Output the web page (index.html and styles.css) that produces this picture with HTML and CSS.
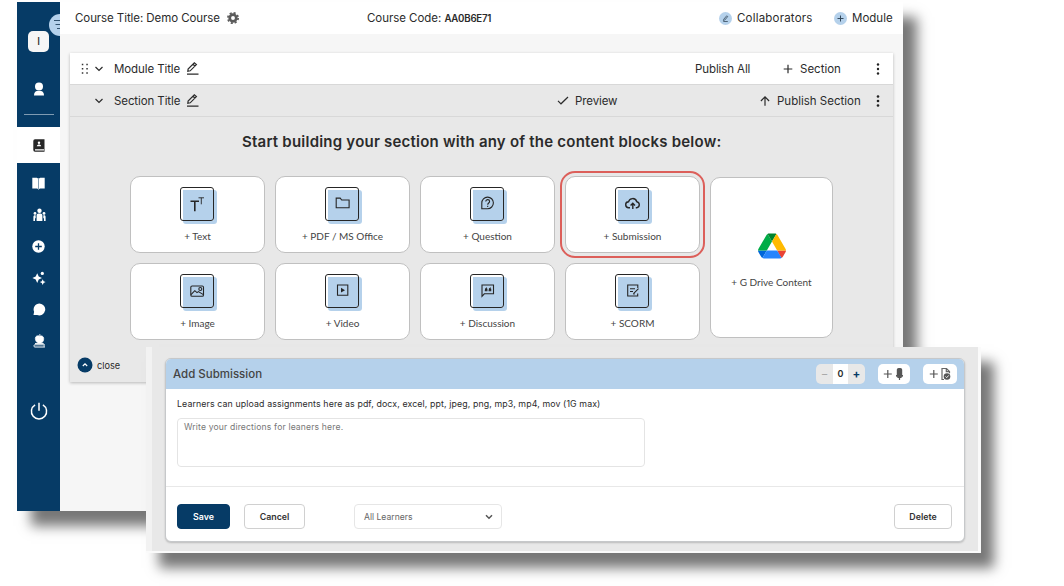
FILE: index.html
```html
<!DOCTYPE html>
<html lang="en">
<head>
    <meta charset="UTF-8">
    <meta name="viewport" content="width=device-width, initial-scale=1.0">
    <title>Course Builder</title>

    <link rel="stylesheet" href="styles.css">
</head>
<body>
    <div class="window">
        <!-- Sidebar -->
        <nav class="sidebar">
            <span class="menu-toggle">
                <svg width="22" height="22" viewBox="0 0 22 22"><path d="M5 6.5h13M6.5 10.5h12M8 14.500h11" stroke="#33536f" stroke-width="1"/></svg>
            </span>
            <div class="initial">I</div>
            <a class="item person"><svg width="12" height="14" viewBox="0 0 12 14" fill="#fff"><circle cx="6" cy="4.500" r="4"/><path d="M1 13.500c0-3 1.500-4.500 3-4.500h4c1.500 0 3 1.500 3 4.500z"/></svg></a>
            <hr>
            <a class="item active"><svg width="12" height="13" viewBox="0 0 12 13"><path d="M2 .2h9.500v12.500H2A1.700 1.700 0 0 1 .3 11V2A1.800 1.800 0 0 1 2 .2z" fill="#262626"/><circle cx="6" cy="3.800" r="1.200" fill="#fff"/><path d="M3.800 7.300c.2-2.400 4.200-2.400 4.400 0zM2 10.200h9v1.300H2z" fill="#fff"/></svg></a>
            <a class="item book"><svg width="13" height="13" viewBox="0 0 13 13" fill="#fff"><path d="M.3.700h4.500l1.300.7v10.700l-1.300-.6H.3zM7 1.400l1.300-.7h4.400v10.800H8.300l-1.300.6z"/><path d="M6.200 1h.8v12h-.8z" opacity=".55"/></svg></a>
            <a class="item people"><svg width="13" height="14" viewBox="0 0 13 14" fill="#fff"><circle cx="6.500" cy="2.700" r="2.200"/><circle cx="2" cy="5.400" r="1.400"/><circle cx="11" cy="5.400" r="1.400"/><path d="M3.600 13V7.500c0-1.300.8-2 2-2h1.800c1.200 0 2 .7 2 2V13zM.4 13V9c0-1.200.5-1.700 1.300-1.700h1V10l-.7.500V13zM12.600 13V9c0-1.200-.5-1.700-1.300-1.700h-1V10l.7.500V13z"/></svg></a>
            <a class="item plus"><svg width="13" height="13" viewBox="0 0 13 13"><circle cx="6.500" cy="6.500" r="6.200" fill="#fff"/><path d="M6.500 3.200v6.600M3.200 6.500h6.600" stroke="#063b66" stroke-width="1.300"/></svg></a>
            <a class="item sparkles"><svg width="14" height="14" viewBox="0 0 14 14" fill="#fff"><path d="M5.200 2.200l1.500 3.400L10 7.100 6.700 8.600l-1.500 3.500-1.500-3.500L.4 7.100l3.300-1.500z"/><circle cx="10.300" cy="2.400" r="1.600"/><path d="M10.700 8.200l.9 2 2 .8-2 .9-.9 2-.9-2-2-.9 2-.8z"/></svg></a>
            <a class="item chat"><svg width="13" height="13" viewBox="0 0 13 13" fill="#fff"><path d="M6.500.4a6 6 0 1 1-2.400 11.600H.5l.6-3.200A6 6 0 0 1 6.500.4z"/></svg></a>
            <a class="item apple"><svg width="13" height="14" viewBox="0 0 13 14" fill="none"><path d="M6.300 2.200C4.500 1.200 2.300 2 2.300 4.500c0 2.600 1.800 4.700 3.100 4.400h2.300C9.500 9 10.900 7 10.700 4.500 10.600 2 8.200 1.200 6.300 2.200zM6 2c0-1 .7-1.700 1.500-1.900" fill="#fff" stroke="#fff" stroke-width=".6"/><path d="M2 9.600h8.700M11.800 10.800H1.800C.6 10.800.6 13 1.800 13h10.100" stroke="#fff" stroke-width="1"/><path d="M11.100 10.800V13" stroke="#fff" stroke-width=".7"/></svg></a>
            <a class="item power"><svg width="18" height="18" viewBox="0 0 18 18" fill="none" stroke="#fff" stroke-width="1.500"><path d="M9 .8v8M5.100 2.900a7.600 7.600 0 1 0 7.800 0"/></svg></a>
        </nav>

        <main class="main">
            <header class="topbar">
                <span class="t-title">Course Title: Demo Course</span>
                <svg class="gear" width="12" height="12" viewBox="0 0 12 12"><circle cx="6" cy="6" r="3.300" fill="none" stroke="#5b5b5b" stroke-width="2.700"/><circle cx="6" cy="6" r="5.150" fill="none" stroke="#5b5b5b" stroke-width="1.700" stroke-dasharray="2.100 1.945"/></svg>
                <span class="t-code">Course Code: <b>AA0B6E71</b></span>
                <svg class="dot" width="13" height="13" viewBox="0 0 13 13"><circle cx="6.500" cy="6.500" r="6.500" fill="#b5d1eb"/><path d="M4.700 7.300l3-3.500 1 .8-3 3.500-1.300.4zM4.300 9.500h4.500" fill="none" stroke="#34495c" stroke-width=".8"/></svg>
                <span class="t-collab">Collaborators</span>
                <svg class="dot" width="13" height="13" viewBox="0 0 13 13"><circle cx="6.500" cy="6.500" r="6.500" fill="#b5d1eb"/><path d="M6.500 3.500v6M3.500 6.500h6" stroke="#34495c" stroke-width="1"/></svg>
                <span class="t-module">Module</span>
            </header>

            <section class="panel">
                <div class="row module-row">
                    <svg class="drag" width="8" height="12" viewBox="0 0 8 12" fill="#333"><path d="M1.800.800h1.500v1.500H1.800zM6.300.800h1.500v1.500H6.300zM1.800 5h1.500v1.500H1.800zM6.300 5h1.500v1.500H6.300zM1.800 9.200h1.500v1.500H1.800zM6.300 9.200h1.500v1.500H6.300z"/></svg>
                    <svg class="chev" width="10" height="8" viewBox="0 0 10 8"><path d="M1.500 2l3.500 3.500L8.500 2"/></svg>
                    <span class="r-title">Module Title</span>
                    <svg class="edit" width="13" height="13" viewBox="0 0 13 13"><path d="M1.800 9.300l.3-2.300L8.300.900l2.100 1.700-6.200 6.200zM7 2.200l2 1.800M1 12.100h11.500"/></svg>
                    <span class="r-publish">Publish All</span>
                    <svg class="line" width="10" height="10" viewBox="0 0 10 10"><path d="M5 .7v8.600M.7 5h8.600"/></svg>
                    <span class="r-section">Section</span>
                    <svg class="dots" width="4" height="12" viewBox="0 0 4 12"><circle cx="2" cy="1.500" r="1.200"/><circle cx="2" cy="6" r="1.200"/><circle cx="2" cy="10.500" r="1.200"/></svg>
                </div>
                <div class="row section-row">
                    <svg class="chev" width="10" height="8" viewBox="0 0 10 8"><path d="M1.500 2l3.500 3.500L8.500 2"/></svg>
                    <span class="r-title">Section Title</span>
                    <svg class="edit" width="13" height="13" viewBox="0 0 13 13"><path d="M1.800 9.300l.3-2.300L8.300.900l2.100 1.700-6.200 6.200zM7 2.200l2 1.800M1 12.100h11.500"/></svg>
                    <svg class="line check" width="12" height="9" viewBox="0 0 12 9"><path d="M1 4.800l3 3L11 1"/></svg>
                    <span class="r-preview">Preview</span>
                    <svg class="line" width="10" height="10" viewBox="0 0 10 10"><path d="M5 9.800V.9M.9 5L5 .9 9.100 5"/></svg>
                    <span class="r-pubsec">Publish Section</span>
                    <svg class="dots" width="4" height="12" viewBox="0 0 4 12"><circle cx="2" cy="1.500" r="1.300"/><circle cx="2" cy="6" r="1.300"/><circle cx="2" cy="10.500" r="1.300"/></svg>
                </div>

                <h1><span>Start building your section with any of the content blocks below:</span></h1>

                <!-- Content blocks -->
                <div class="blocks">
                    <div class="card">
                        <div class="tile"><svg width="34" height="34" viewBox="0 0 34 34"><path d="M10.500 14.200h8.500M14.800 14.200v10" stroke-width="1.600"/><path d="M18.500 10.800h5.500M21.300 10.800v6.500" stroke-width=".9"/></svg></div>
                        <span>+ Text</span>
                    </div>
                    <div class="card">
                        <div class="tile"><svg width="34" height="34" viewBox="0 0 34 34"><path d="M11.200 20.800v-9.700h4l1.500 1.900h7.400v7.800z"/></svg></div>
                        <span>+ PDF / MS Office</span>
                    </div>
                    <div class="card">
                        <div class="tile"><svg width="34" height="34" viewBox="0 0 34 34"><path d="M11.800 21.700V16a5.800 5.800 0 1 1 5.800 5.700z"/><path d="M15.800 14.500c0-2.500 3.800-2.400 3.800 0 0 1.500-1.900 1.500-1.900 3.200M17.700 18.800v1.300"/></svg></div>
                        <span>+ Question</span>
                    </div>
                    <div class="card selected">
                        <div class="tile"><svg width="34" height="34" viewBox="0 0 34 34"><path d="M15 20.700h-1.200a2.900 2.900 0 0 1-.3-5.900 4.300 4.300 0 0 1 8.300-.1 3.100 3.100 0 0 1 .3 6h-1.300M17.800 22v-5.500M15.600 18.500l2.200-2.200 2.200 2.200" stroke-width="1.400"/></svg></div>
                        <span>+ Submission</span>
                    </div>
                    <div class="card">
                        <div class="tile"><svg width="34" height="34" viewBox="0 0 34 34"><rect x="10.800" y="12" width="12.700" height="10.300" rx="1.300"/><path d="M11 20.700l3.800-4 2.200 1.900 1.400-1 5 3"/><circle cx="20.300" cy="15" r="1.500"/></svg></div>
                        <span>+ Image</span>
                    </div>
                    <div class="card">
                        <div class="tile"><svg width="34" height="34" viewBox="0 0 34 34"><path d="M12.500 11h10.300v10.300H12.500z"/><path d="M16 13.800l4 2.400-4 2.400z" fill="#262626" stroke="none"/></svg></div>
                        <span>+ Video</span>
                    </div>
                    <div class="card">
                        <div class="tile"><svg width="34" height="34" viewBox="0 0 34 34"><path d="M12 22.300V11h11.500v8.800H14.300z"/><path d="M17 13.700c-1.400.5-1.800 1.500-1.700 3h1.600v-1.300h-1M20.800 13.700c-1.400.5-1.800 1.500-1.700 3h1.600v-1.300h-1"/></svg></div>
                        <span>+ Discussion</span>
                    </div>
                    <div class="card">
                        <div class="tile"><svg width="34" height="34" viewBox="0 0 34 34"><path d="M22.800 14v-3H12.700v11h10v-2.500M15 14.700h5M15 17.500h3M18.500 19.600l5-5M18.200 20h1.500"/></svg></div>
                        <span>+ SCORM</span>
                    </div>
                    <div class="card drive">
                        <svg width="28" height="26" viewBox="0 0 87.300 78"><path d="m6.600 66.850 3.850 6.650c.8 1.400 1.950 2.500 3.300 3.300l13.750-23.800h-27.500c0 1.550.4 3.100 1.200 4.500z" fill="#0066da"/><path d="m43.650 25-13.750-23.800c-1.350.8-2.500 1.900-3.300 3.300l-25.400 44a9.060 9.060 0 0 0 -1.200 4.500h27.500z" fill="#00ac47"/><path d="m73.550 76.800c1.350-.8 2.500-1.900 3.300-3.300l1.600-2.750 7.650-13.250c.8-1.400 1.200-2.950 1.200-4.500h-27.502l5.852 11.500z" fill="#ea4335"/><path d="m43.650 25 13.750-23.800c-1.350-.8-2.900-1.200-4.500-1.200h-18.500c-1.600 0-3.150.45-4.500 1.200z" fill="#00832d"/><path d="m59.800 53h-32.300l-13.750 23.800c1.350.8 2.900 1.200 4.500 1.200h50.800c1.600 0 3.150-.45 4.500-1.200z" fill="#2684fc"/><path d="m73.400 26.500-12.700-22c-.8-1.400-1.950-2.500-3.300-3.300l-13.750 23.800 16.150 28h27.450c0-1.550-.4-3.100-1.200-4.500z" fill="#ffba00"/></svg>
                        <span>+ G Drive Content</span>
                    </div>
                </div>

                <div class="close">
                    <svg width="16" height="16" viewBox="0 0 16 16"><circle cx="8" cy="8" r="7.500" fill="#063b66"/><path d="M5.800 9L8 6.900 10.200 9" fill="none" stroke="#fff" stroke-width="1.200"/></svg>
                    <span>close</span>
                </div>
            </section>
        </main>
    </div>

    <!-- Submission form -->
    <div class="modal">
        <form class="form">
            <div class="form-head">
                <h2>Add Submission</h2>
                <div class="stepper"><i class="minus">−</i><b>0</b><i class="add">+</i></div>
                <div class="tool mic"><svg width="22" height="14" viewBox="0 0 22 14"><path d="M4.800 3v8M.8 7h8" stroke="#555" stroke-width="1.200"/><rect x="13.800" y="1" width="5.400" height="9" rx="1.800" fill="#555"/><path d="M13.500 8c.4 3.500 5.600 3.500 6 0M16.500 10v3" fill="none" stroke="#555" stroke-width="1.200"/></svg></div>
                <div class="tool"><svg width="22" height="14" viewBox="0 0 22 14" fill="none"><path d="M4.800 3v8M.8 7h8" stroke="#555" stroke-width="1.200"/><path d="M15 12.500h-2V1.500h4.500l3 3v1.800M17.300 1.500v3.200h3" stroke="#666" stroke-width="1.200"/><circle cx="18" cy="9.500" r="3.300" fill="#555"/><path d="M16.500 9.500l1.200 1.200 2-2.300" stroke="#fff" stroke-width=".9"/></svg></div>
            </div>
            <div class="form-body">
                <label for="directions">Learners can upload assignments here as pdf, docx, excel, ppt, jpeg, png, mp3, mp4, mov (1G max)</label>
                <textarea id="directions" placeholder="Write your directions for leaners here."></textarea>
            </div>
            <div class="form-foot">
                <button type="button" class="save">Save</button>
                <button type="button" class="cancel">Cancel</button>
                <div class="select"><span>All Learners</span><svg width="8" height="6" viewBox="0 0 8 6"><path d="M1 1.300l3 3 3-3" fill="none" stroke="#555" stroke-width="1.500"/></svg></div>
                <button type="button" class="delete">Delete</button>
            </div>
        </form>
    </div>
</body>
</html>
```
FILE: styles.css
```css
* {
    box-sizing: border-box;
}

body {
    margin: 0;
    width: 1064px;
    height: 586px;
    overflow: hidden;
    background: #fff;
    color: #2b2b2b;
    font-family: Inter, "Open Sans", sans-serif;
    font-size: 11.5px;
}

svg {
    display: block;
    flex: none;
}

span {
    white-space: nowrap;
}

.window {
    display: flex;
    width: 886px;
    height: 509px;
    margin: 2px 0 0 17px;
    box-shadow: 14px 15px 12px #777;
}

/* Sidebar */
.sidebar {
    position: relative;
    display: flex;
    flex-direction: column;
    align-items: center;
    width: 43px;
    overflow: hidden;
    background: #063b66;
}

.menu-toggle {
    position: absolute;
    top: 12px;
    left: 32px;
    width: 22px;
    height: 22px;
    border-radius: 50%;
    background: #b5d1eb;
}

.initial {
    position: relative;
    width: 21px;
    height: 21px;
    margin-top: 29px;
    border-radius: 5px;
    background: #f6f6f6;
    line-height: 21px;
    text-align: center;
    font-size: 10px;
    font-weight: 500;
}

.item {
    display: flex;
    align-items: center;
    justify-content: center;
    flex: none;
    width: 43px;
    height: 32px;
    padding-left: 1px;
}

.person {
    margin-top: 21px;
}

.sidebar hr {
    width: 30px;
    height: 1px;
    margin: 9px 0 12px;
    border: 0;
    background: #7f9bb2;
    flex: none;
}

.active {
    height: 36px;
    background: #fff;
}

.book {
    height: 38px;
    padding: 2px 1px 0 0;
}

.people {
    height: 28px;
}

.plus {
    height: 34px;
    padding-left: 0;
}

.sparkles {
    height: 30px;
    padding-left: 0;
}

.chat {
    height: 33px;
}

.apple {
    height: 30px;
}

.power {
    margin-top: 39px;
    padding-left: 0;
    height: 32px;
}

/* Main area */
.main {
    width: 843px;
    background: #f6f6f6;
}

.topbar {
    display: grid;
    grid-template-columns: 152px 140px 352px 18px 97px 18px auto;
    align-items: center;
    height: 32px;
    padding-left: 15px;
    background: #fff;
}

.t-title {
    letter-spacing: -0.08px;
}

.t-code {
    letter-spacing: -0.05px;
}

.t-collab {
    letter-spacing: 0.2px;
}

.t-code b {
    font-size: 9.7px;
    font-weight: 600;
    letter-spacing: -0.25px;
}

.panel {
    width: 823px;
    height: 329px;
    margin: 19px 0 0 10px;
    background: #e8e8e8;
    box-shadow: 0 1px 3px rgba(0, 0, 0, 0.25);
}

.row {
    display: grid;
    align-items: center;
    height: 32px;
    border-bottom: 1px solid #d8d8d8;
}

.module-row {
    grid-template-columns: 14px 20px 72px 509px 88px 17px 76px 4px;
    padding-left: 10px;
    background: #fff;
}

.section-row {
    grid-template-columns: 20px 72px 371px 18px 185px 17px 99px 4px;
    padding-left: 24px;
}

.r-title,
.r-publish,
.r-preview {
    letter-spacing: -0.1px;
}

.chev,
.edit,
.line {
    fill: none;
    stroke: #2b2b2b;
    stroke-width: 1.2;
}

.dots {
    fill: #222;
}

.panel h1 {
    margin: 0;
    height: 59px;
    padding: 15px 0 0 172px;
    font-size: 15px;
    line-height: 20px;
    font-weight: 600;
    letter-spacing: 0.22px;
}

.blocks {
    display: grid;
    grid-template-columns: repeat(4, 135px) 123px;
    grid-template-rows: 77px 77px;
    gap: 10px;
    margin-left: 60px;
}

.card {
    display: flex;
    flex-direction: column;
    align-items: center;
    padding: 10px 0 0;
    border: 1px solid #c0c0c0;
    border-radius: 10px;
    background: #fff;
    font-family: Lato, sans-serif;
    font-size: 10px;
    line-height: 14px;
    color: #444;
}

.tile {
    width: 34px;
    height: 34px;
    margin: 0 1px 8px 0;
    border: 1px solid #262626;
    border-radius: 3px;
    background: linear-gradient(#b5d1eb, #b5d1eb) 2px 2px no-repeat;
    box-shadow: 3px 3px 0 #b5d1eb;
}

.tile svg {
    margin: -1px;
    fill: none;
    stroke: #262626;
    stroke-width: 1.1;
}

.selected {
    outline: 2px solid #dc5f5a;
    outline-offset: 3px;
}

.drive {
    grid-column: 5;
    grid-row: 1 / 3;
    margin: 1px 0 2px;
    padding-top: 55px;
}

.drive span {
    margin-top: 16px;
}

.close {
    display: flex;
    align-items: center;
    gap: 4px;
    margin: 17px 0 0 7px;
    font-size: 9.2px;
}

/* Submission form */
.modal {
    position: absolute;
    left: 146px;
    top: 347px;
    width: 835px;
    height: 206px;
    padding: 11px 16px 11px 19px;
    border: solid #fafafa;
    border-width: 0 3px 2px 0;
    background: linear-gradient(90deg, #f2f2f2 6px, #e8e8e8 6px);
    box-shadow: 13px 15px 12px #777;
}

.modal .form {
    width: 800px;
    height: 184px;
    overflow: hidden;
    border: 1px solid #c6c8ca;
    border-radius: 6px;
    background: #fff;
    box-shadow: 0 1px 2px rgba(0, 0, 0, 0.2);
}

.form-head {
    display: flex;
    align-items: center;
    height: 30px;
    padding: 0 7px;
    background: #b5d1eb;
}

.form-head h2 {
    margin: 0 auto 0 0;
    font-size: 11.5px;
    font-weight: 500;
    color: #444;
}

.stepper {
    display: flex;
    width: 49px;
    height: 20px;
    margin-right: 13px;
    border-radius: 5px;
    overflow: hidden;
    background: #e8e8e8;
    line-height: 20px;
    text-align: center;
}

.stepper i {
    flex: 1;
    font-style: normal;
    color: #aaa;
}

.stepper .add {
    color: #063b66;
    font-weight: 700;
}

.stepper b {
    width: 15px;
    background: #fff;
    font-size: 9px;
    font-weight: 600;
}

.tool {
    display: flex;
    align-items: center;
    justify-content: center;
    width: 34px;
    height: 20px;
    border-radius: 5px;
    background: #fff;
}

.mic {
    width: 32px;
    margin-right: 13px;
}

.form-body {
    height: 98px;
    padding: 8px 11px 0;
    border-bottom: 1px solid #e8e8e8;
}

.form-body label {
    display: block;
    height: 21px;
    line-height: 13px;
    font-size: 8.8px;
    letter-spacing: 0.11px;
    white-space: nowrap;
}

.form-body textarea {
    display: block;
    width: 468px;
    height: 49px;
    padding: 3px 6px;
    border: 1px solid #e4e4e4;
    border-radius: 4px;
    resize: none;
    font-family: inherit;
    font-size: 8.6px;
    letter-spacing: 0.15px;
}

textarea::placeholder {
    color: #777;
}

.form-foot {
    display: flex;
    height: 54px;
    padding: 17px 12px 0 11px;
}

.form-foot button {
    height: 25px;
    padding: 0;
    border: 1px solid #d0d0d0;
    border-radius: 4px;
    background: #fff;
    font-family: inherit;
    font-size: 8.8px;
    font-weight: 600;
    color: #333;
}

.form-foot .save {
    width: 53px;
    border-color: #063b66;
    background: #063b66;
    color: #fff;
}

.form-foot .cancel {
    width: 61px;
    margin: 0 49px 0 14px;
}

.form-foot .delete {
    width: 58px;
    margin-left: auto;
}

.select {
    display: flex;
    align-items: center;
    justify-content: space-between;
    width: 148px;
    height: 25px;
    padding: 0 8px 0 9px;
    border: 1px solid #e6e6e6;
    border-radius: 4px;
    font-size: 8.6px;
    color: #666;
}
```
